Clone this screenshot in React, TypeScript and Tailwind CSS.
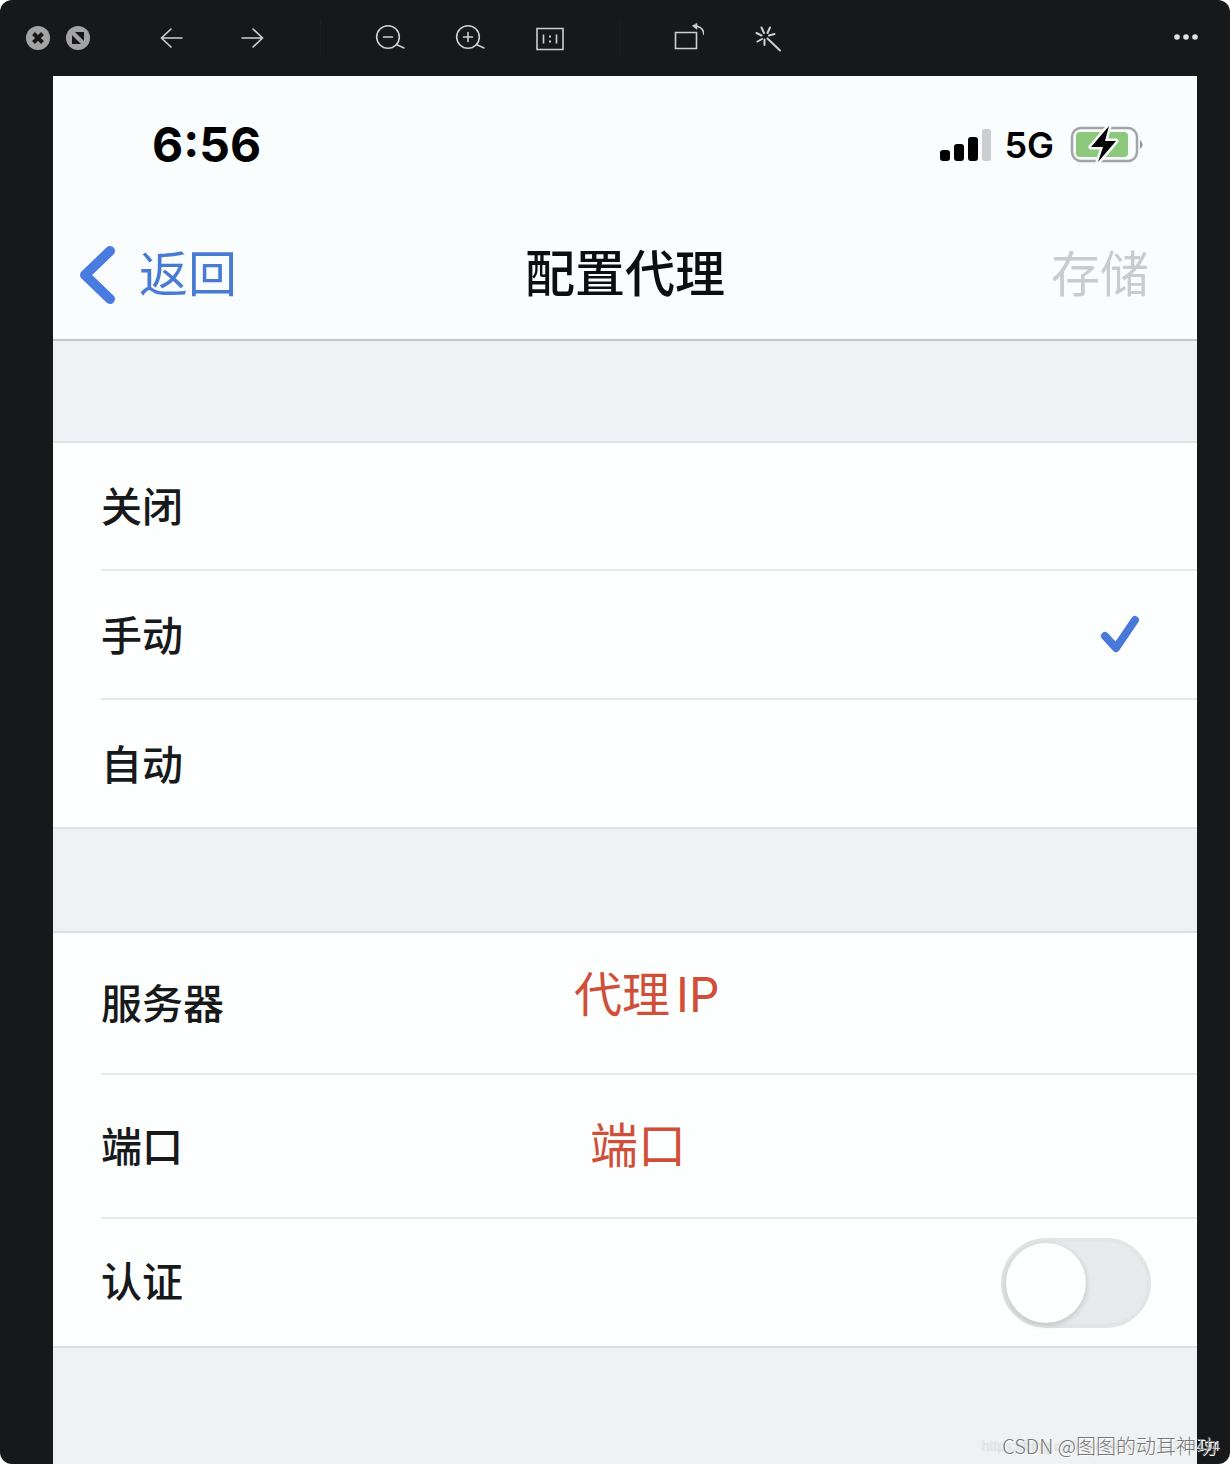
import React, { useState } from 'react';

type Mode = 'off' | 'manual' | 'auto';

const MODES: { id: Mode; label: string }[] = [
  { id: 'off', label: '关闭' },
  { id: 'manual', label: '手动' },
  { id: 'auto', label: '自动' },
];

const ToolButton = ({ label, className = '', children }: any) => (
  <button type="button" aria-label={label} className={`flex h-8 w-8 shrink-0 items-center justify-center ${className}`}>
    <svg width="32" height="32" viewBox="0 0 32 32" fill="none" stroke="#cfcfcf" strokeWidth="1.6" strokeLinecap="round">
      {children}
    </svg>
  </button>
);

const Toolbar = () => (
  <header className="flex h-[76px] items-center pl-[22px] pr-7">
    <ToolButton label="关闭窗口">
      <circle cx="16" cy="16" r="12" fill="#a3a3a4" stroke="none" />
      <path d="M11.500 11.500l9 9M20.500 11.500l-9 9" stroke="#17181a" strokeWidth="4" strokeLinecap="butt" />
    </ToolButton>
    <ToolButton label="缩放窗口" className="ml-2">
      <circle cx="16" cy="16" r="12" fill="#a3a3a4" stroke="none" />
      <path d="M13 10h9v9zM10 13v9h9z" fill="#17181a" stroke="none" />
    </ToolButton>
    <ToolButton label="上一张" className="ml-[62px]">
      <path d="M26 16H6M15 7l-9.500 9 9.500 9" />
    </ToolButton>
    <ToolButton label="下一张" className="ml-12">
      <path d="M6 16h20M17 7l9.500 9-9.500 9" />
    </ToolButton>
    <span className="ml-[52px] h-9 w-px bg-[#1d1e20]" />
    <ToolButton label="缩小" className="ml-[53px]">
      <circle cx="14" cy="15" r="11.300" />
      <path d="M9.500 15h9M22.500 22.500L30 26" />
    </ToolButton>
    <ToolButton label="放大" className="ml-12">
      <circle cx="14" cy="15" r="11.300" />
      <path d="M9.500 15h9M14 10.500v9M22.500 22.500L30 26" />
    </ToolButton>
    <ToolButton label="实际大小" className="ml-12">
      <path d="M3 6.500h26v21H3zM9.500 12.500v9M22.500 12.500v9" strokeLinecap="butt" />
      <path d="M16 13.500v2M16 18.500v2" strokeWidth="2" strokeLinecap="butt" />
    </ToolButton>
    <span className="ml-[53px] h-9 w-px bg-[#1d1e20]" />
    <ToolButton label="旋转" className="ml-[52px]">
      <path d="M3.500 10.500h21v16h-21z" strokeLinecap="butt" />
      <path d="M22 4c6 0 9.500 3 10 8.500" />
      <path d="M25 1.500v6L20.500 4z" fill="#cfcfcf" strokeWidth="0.500" />
    </ToolButton>
    <ToolButton label="美化" className="ml-12">
      <path
        d="M15.500 16.500L28 28.500M12 11L9.500 5.500M15.500 11L18 5.500M9.500 13.500L4.500 11M17 13.500l5.500-1.500M10 17l-4.500 2.500M12.500 17.500v5.500"
        strokeWidth="2"
      />
    </ToolButton>
    <ToolButton label="更多" className="ml-auto">
      <g fill="#e0e0e0" stroke="none">
        <circle cx="7" cy="15" r="2.800" />
        <circle cx="16" cy="15" r="2.800" />
        <circle cx="25" cy="15" r="2.800" />
      </g>
    </ToolButton>
  </header>
);

const StatusBar = () => (
  <div className="flex h-[138px] items-center justify-between pl-[99px] pr-[51px] font-['Inter',sans-serif] text-black">
    <span className="text-5xl leading-none font-bold">6:56</span>
    <div className="flex items-center">
      <svg width="52" height="36" viewBox="0 0 52 36" aria-label="信号">
        <rect x="0" y="23" width="10" height="11" rx="3" />
        <rect x="14" y="17" width="10" height="17" rx="3" />
        <rect x="28" y="10" width="10" height="24" rx="3" />
        <rect x="42" y="2" width="9" height="32" rx="2.500" fill="#cbcdce" />
      </svg>
      <span className="ml-3 text-4xl leading-none font-semibold">5G</span>
      <svg className="ml-4" width="76" height="40" viewBox="0 0 76 40" aria-label="正在充电">
        <rect x="2" y="3" width="65" height="33" rx="9" fill="none" stroke="#a2a4a5" strokeWidth="2.500" />
        <rect x="6" y="7" width="52" height="25" rx="4" fill="#8cc97c" />
        <path d="M70 15q5 4.500 0 9z" fill="#8f9192" />
        <path d="M39 1L21 22h12l-5 15 18-21H35z" fill="#000" stroke="#f8fcfd" strokeWidth="5" paintOrder="stroke" strokeLinejoin="round" />
      </svg>
    </div>
  </div>
);

const NavBar = () => (
  <nav className="grid h-[127px] grid-cols-3 items-center border-b-2 border-[#c3c6c7] px-6 pb-1 text-[49px]">
    <button type="button" className="flex items-center text-[#4a7bd4]">
      <svg width="44" height="64" viewBox="0 0 44 64" fill="none" stroke="#4a7be0" strokeWidth="10" strokeLinecap="round" strokeLinejoin="round">
        <path d="M33 8L8 32l25 24" />
      </svg>
      <span className="ml-[18px]">返回</span>
    </button>
    <h1 className="text-center text-[50px] font-medium whitespace-nowrap text-[#0c0e10]">配置代理</h1>
    <button type="button" disabled className="mr-6 justify-self-end text-[#c9cccd]">存储</button>
  </nav>
);

export default function App() {
  const [mode, setMode] = useState<Mode>('manual');
  const [server, setServer] = useState('代理IP');
  const [port, setPort] = useState('端口');
  const [auth, setAuth] = useState(false);

  return (
    <div className="bg-white">
      <div className="relative flex min-h-screen flex-col overflow-hidden rounded-xl bg-[#17181a] font-['Inter','Noto_Sans_CJK_SC',sans-serif]">
        <Toolbar />
        <main className="mr-[33px] ml-[53px] grow bg-[#eff2f5]">
          <div className="bg-[#f9fdfe]">
            <StatusBar />
            <NavBar />
          </div>

          <div role="radiogroup" aria-label="HTTP" className="mt-[100px] border-y-2 border-[#e0e3e5] bg-[#fdfefe] pl-12 text-[41px] font-medium text-[#17191b]">
            {MODES.map((m, i) => (
              <label key={m.id} className={`relative flex items-center justify-between pr-14 ${i > 0 ? 'h-[129px] border-t-2 border-[#e6e8ea]' : 'h-[126px]'}`}>
                <span className="pt-1">{m.label}</span>
                <input type="radio" name="mode" className="sr-only" checked={mode === m.id} onChange={() => setMode(m.id)} />
                {mode === m.id && (
                  <svg width="42" height="40" viewBox="0 0 42 40" fill="none" stroke="#4a78d8" strokeWidth="8" strokeLinecap="round" strokeLinejoin="round">
                    <path d="M6 21l11 12L36 5" />
                  </svg>
                )}
              </label>
            ))}
          </div>

          <section className="mt-[102px] border-y-2 border-[#dcdfe1] bg-[#fdfefe] pl-12 text-[41px] font-medium text-[#17191b]">
            <div className="flex h-[140px] items-center">
              <label htmlFor="server" className="w-[473px] shrink-0 pt-1">服务器</label>
              <input
                id="server"
                value={server}
                onChange={(e) => setServer(e.target.value)}
                className="mb-6 min-w-0 grow bg-transparent text-5xl font-normal text-[#cf4f38] outline-none [text-autospace:normal]"
              />
            </div>
            <div className="flex h-36 items-center border-t-2 border-[#e6e8ea]">
              <label htmlFor="port" className="w-[489px] shrink-0 pt-1">端口</label>
              <input
                id="port"
                value={port}
                onChange={(e) => setPort(e.target.value)}
                className="mb-2 min-w-0 grow bg-transparent text-5xl font-normal text-[#cf4f38] outline-none"
              />
            </div>
            <div className="flex h-[129px] items-center justify-between border-t-2 border-[#e6e8ea] pr-[46px]">
              <span id="auth-label">认证</span>
              <button
                type="button"
                role="switch"
                aria-checked={auth}
                aria-labelledby="auth-label"
                onClick={() => setAuth(!auth)}
                className={`flex h-[90px] w-[150px] items-center rounded-full border-4 px-px ${auth ? 'justify-end border-green-500 bg-green-500' : 'border-[#e2e4e5] bg-[#e7e9ea]'}`}
              >
                <span className="h-20 w-20 rounded-full bg-[#fdfefe] shadow-[0_2px_6px_rgba(0,0,0,0.18)]" />
              </button>
            </div>
          </section>
        </main>

        <span className="absolute right-[10px] bottom-2 font-['Liberation_Sans',sans-serif] text-sm leading-5 whitespace-nowrap text-white/60 [text-shadow:0_0_1px_#bbb]">
          https://blog.csdn.net/weixin_43272494
        </span>
        <span className="absolute right-[14px] bottom-1 font-['Noto_Sans_CJK_SC',sans-serif] text-xl leading-7 font-light whitespace-nowrap text-[#777] [text-shadow:1px_1px_0_#fff]">
          CSDN @图图的动耳神功
        </span>
      </div>
    </div>
  );
}
